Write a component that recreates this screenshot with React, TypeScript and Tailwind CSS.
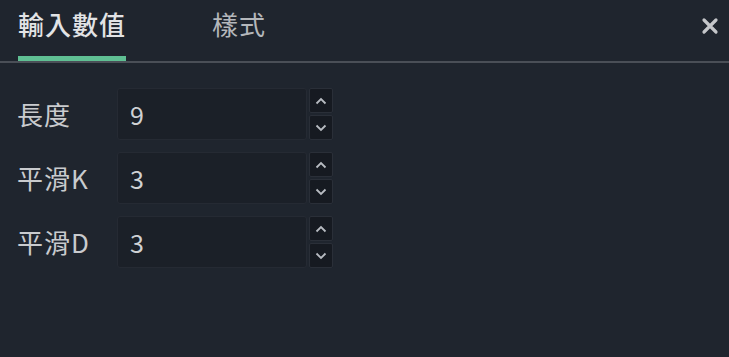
import React from "react";

const font = { fontFamily: '"Noto Sans CJK TC", "Noto Sans", sans-serif' };

function Up() {
  return (
    <svg width="12" height="8" viewBox="0 0 12 8" fill="none">
      <path d="M1.5 6.5 L6 2 L10.5 6.5" stroke="#b8bcc2" strokeWidth="1.8" />
    </svg>
  );
}
function Down() {
  return (
    <svg width="12" height="8" viewBox="0 0 12 8" fill="none">
      <path d="M1.5 1.5 L6 6 L10.5 1.5" stroke="#b8bcc2" strokeWidth="1.8" />
    </svg>
  );
}

function Row({ label, value }: { label: string; value: string }) {
  return (
    <div className="flex items-center h-[52px]">
      <div className="w-[117px] shrink-0 pl-[17px] text-[26px] tracking-[1px] text-[#c9cbce] leading-none whitespace-nowrap">{label}</div>
      <div className="w-[190px] shrink-0 h-[52px] bg-[#1b2028] border border-[#252a33] rounded-[3px] flex items-center pl-[12px] text-[25px] text-[#cfd1d4] leading-none">
        {value}
      </div>
      <div className="ml-[2px] flex flex-col gap-[2px]">
        <div className="w-[24px] h-[25px] bg-[#161a21] border border-[#2a2f38] rounded-[2px] flex items-center justify-center">
          <Up />
        </div>
        <div className="w-[24px] h-[25px] bg-[#161a21] border border-[#2a2f38] rounded-[2px] flex items-center justify-center">
          <Down />
        </div>
      </div>
    </div>
  );
}

export default function App() {
  return (
    <div className="w-[729px] h-[357px] bg-[#1f252e] overflow-hidden" style={font}>
      <div className="relative h-[63px] border-b-2 border-[#4a4f57] flex items-end">
        <div className="ml-[18px] w-[108px] h-full flex flex-col justify-between">
          <div className="pt-[11px] text-[26px] leading-none font-medium text-[#e2e3e5] tracking-[1px] whitespace-nowrap">輸入數值</div>
          <div className="h-[5px] bg-[#5fbf93]" />
        </div>
        <div className="ml-[86px] h-full pt-[11px] text-[26px] leading-none text-[#b4b7bb] tracking-[1px] whitespace-nowrap">樣式</div>
        <div className="absolute right-[10px] top-[17px]">
          <svg width="18" height="18" viewBox="0 0 18 18">
            <path d="M3 3 L15 15 M15 3 L3 15" stroke="#c4c6c9" strokeWidth="3.2" strokeLinecap="round" />
          </svg>
        </div>
      </div>
      <div className="pt-[25px] flex flex-col gap-[12px]">
        <Row label="長度" value="9" />
        <Row label="平滑K" value="3" />
        <Row label="平滑D" value="3" />
      </div>
    </div>
  );
}
